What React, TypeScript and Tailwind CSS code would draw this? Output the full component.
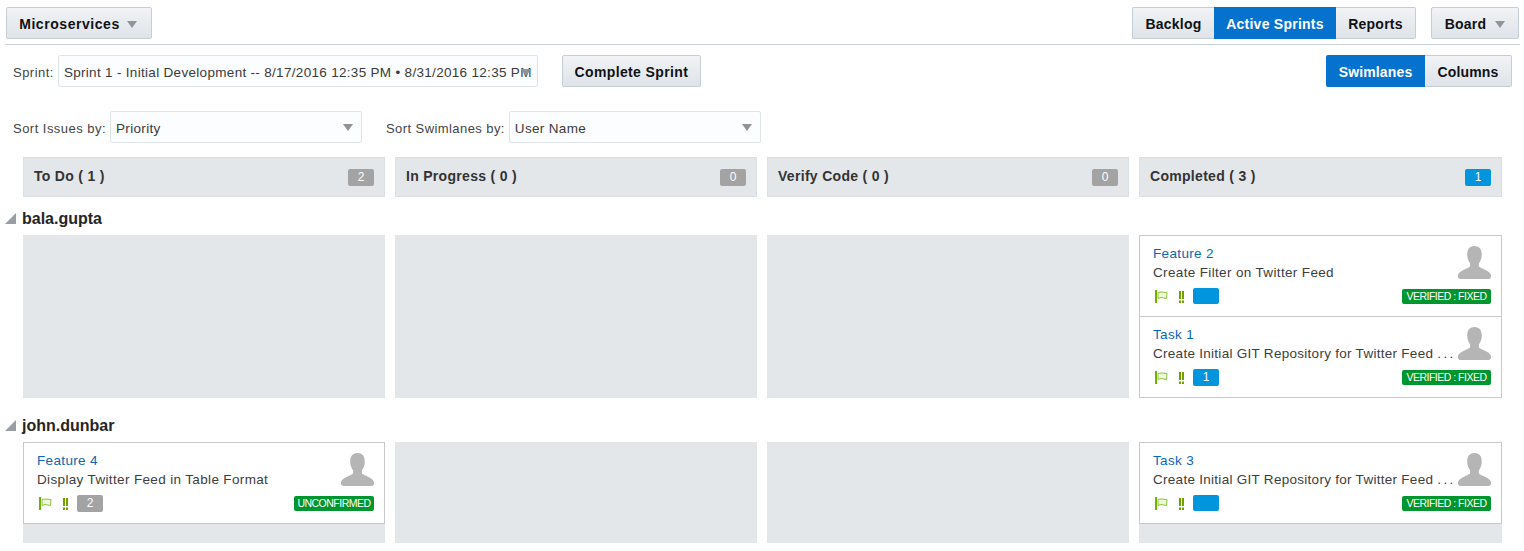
const btn = "h-8 flex items-center justify-center pt-[2px] border border-[#c4ced7] bg-gradient-to-b from-[#f1f3f5] to-[#dfe4e8] text-[14px] font-bold text-[#0f1214]";
const active = "h-8 flex items-center justify-center pt-[2px] bg-[#0572ce] text-[14px] font-bold text-white";
const label = "text-[13px] pt-[4px] text-[#444] tracking-[0.47px]";
const select = "ml-[4px] w-[252px] h-8 flex items-center justify-between pl-[5px] pr-[8px] bg-[#fcfdfe] border border-[#dfe4e8] rounded-[2px] text-[13.5px] text-[#3a3a3a] tracking-[0.33px]";

function Caret({ className = "" }: { className?: string }) {
  return (
    <svg width="10" height="7" viewBox="0 0 10 7" className={className}>
      <polygon points="0,0 10,0 5,7" fill="#8f9499" />
    </svg>
  );
}

function Twisty() {
  return (
    <svg width="11" height="11" viewBox="0 0 11 11" className="shrink-0">
      <polygon points="11,0 11,11 0,11" fill="#9a9ea3" />
    </svg>
  );
}

function Flag() {
  return (
    <svg width="13" height="14" viewBox="0 0 13 14" className="ml-[2px] mt-[2px] shrink-0">
      <rect x="0" y="0" width="2" height="13" fill="#6eb200" />
      <path d="M3 2.5 L6 2 L12 2.5 L11.5 8.5 L6 7.5 L3 8.5 Z" fill="#eef7dc" stroke="#8fc43a" strokeWidth="1" />
    </svg>
  );
}

function Bang() {
  return (
    <svg width="5" height="12" viewBox="0 0 5 12" className="ml-[11px] mt-[3px] shrink-0">
      <rect x="0" y="0" width="2" height="8" fill="#6f9f00" />
      <rect x="3" y="0" width="2" height="8" fill="#6f9f00" />
      <rect x="0" y="9.5" width="2" height="2.5" fill="#6f9f00" />
      <rect x="3" y="9.5" width="2" height="2.5" fill="#6f9f00" />
    </svg>
  );
}

function Avatar() {
  return (
    <svg width="33" height="33" viewBox="0 0 34 34" className="absolute right-[10px] top-[10px]">
      <path
        d="M17 0 C11.5 0 9.5 4 9.5 9 C9.5 13 11 16 12.5 18 L12.5 21 C10 23.5 1 25 0 30 L0 31.5 C0 33 1 34 2.5 34 L31.5 34 C33 34 34 33 34 31.5 L34 30 C33 25 24 23.5 21.5 21 L21.5 18 C23 16 24.5 13 24.5 9 C24.5 4 22.5 0 17 0 Z"
        fill="#b5b5b5"
      />
    </svg>
  );
}

function Card({
  id,
  title,
  more = false,
  status,
  statusW,
  badge,
  badgeColor,
  className = "",
}: {
  id: string;
  title: string;
  more?: boolean;
  status: string;
  statusW: string;
  badge: string;
  badgeColor: string;
  className?: string;
}) {
  return (
    <div className={"relative bg-white shrink-0 pl-[13px] pr-[10px] pt-[9px] " + className}>
      <div className="text-[13.5px] leading-[18px] text-[#0b66b3] tracking-[0.35px]">{id}</div>
      <div className={"text-[13.5px] leading-[20px] text-[#3d3d3d] whitespace-nowrap " + (more ? "tracking-[0.28px]" : "tracking-[0.35px]")}>
        {title}
        {more ? <span className="ml-[4px] tracking-[2.4px]">...</span> : null}
      </div>
      <Avatar />
      <div className="flex items-start h-[17px] mt-[5px]">
        <Flag />
        <Bang />
        <span className={"ml-[9px] w-[26px] rounded-[2px] text-white text-[12px] text-center " + (badge ? "h-[17px] leading-[17px] " : "h-[16px] ") + badgeColor}>{badge}</span>
        <span className={"ml-auto mt-[1px] h-[15px] rounded-[2px] bg-[#00962f] text-white text-[10.5px] leading-[15px] tracking-[-0.5px] text-center whitespace-nowrap " + statusW}>{status}</span>
      </div>
    </div>
  );
}

function Header({ title, count, color }: { title: string; count: string; color: string }) {
  return (
    <div className="h-10 bg-[#e3e7ea] border border-[#d9dfe3] flex items-center justify-between pl-[10px] pr-[10px]">
      <span className="text-[14px] font-bold text-[#333] tracking-[0.3px] pb-[2px]">{title}</span>
      <span className={"w-[26px] h-[17px] rounded-[2px] text-white text-[12px] leading-[17px] text-center " + color}>{count}</span>
    </div>
  );
}

function Empty({ h }: { h: string }) {
  return <div className={"bg-[#e3e7ea] " + h} />;
}

function LaneTitle({ name }: { name: string }) {
  return (
    <div className="flex items-center h-[20px] pl-[5px]">
      <Twisty />
      <span className="ml-[6px] pt-[2px] text-[16px] leading-[20px] font-bold text-[#252525]">{name}</span>
    </div>
  );
}

const cols = "grid grid-cols-[362px_362px_362px_363px] gap-x-[10px] w-[1479px] ml-[23px] ";

export default function App() {
  return (
    <div className="w-[1524px] h-[551px] overflow-hidden bg-white font-['Liberation_Sans',Arial,sans-serif]">
      <div className="mx-[5px] pl-[1px] pr-[1px] h-[45px] border-b border-[#cdd2d6] pt-[7px] flex items-start w-[1515px]">
        <div className={btn + " w-[146px] rounded-[2px] gap-[7px] pr-[2px] tracking-[0.55px]"}>
          <span>Microservices</span>
          <Caret />
        </div>
        <div className="ml-auto flex tracking-[0.25px]">
          <div className={btn + " w-[82px] rounded-l-[2px] border-r-0"}>Backlog</div>
          <div className={active + " w-[122px]"}>Active Sprints</div>
          <div className={btn + " w-[80px] rounded-r-[2px] border-l-0"}>Reports</div>
          <div className={btn + " ml-[15px] w-[88px] rounded-[2px] gap-[9px]"}>
            <span>Board</span>
            <Caret />
          </div>
        </div>
      </div>

      <div className="flex items-center h-8 mt-[10px] pl-[13px] pr-[12px]">
        <span className={label}>Sprint:</span>
        <div className="relative ml-[4px] w-[480px] h-8 flex items-center pl-[5px] pt-[4px] bg-[#fcfdfe] border border-[#dfe4e8] rounded-[2px] text-[13.5px] text-[#3a3a3a] tracking-[0.31px] whitespace-nowrap overflow-hidden">
          Sprint 1 - Initial Development -- 8/17/2016 12:35 PM • 8/31/2016 12:35 PM
          <Caret className="absolute right-[6px] top-[13px]" />
        </div>
        <div className={btn + " ml-[24px] w-[139px] rounded-[2px] tracking-[0.37px]"}>Complete Sprint</div>
        <div className="ml-auto flex tracking-[0.15px]">
          <div className={active + " w-[99px] rounded-l-[2px]"}>Swimlanes</div>
          <div className={btn + " w-[87px] rounded-r-[2px] border-l-0"}>Columns</div>
        </div>
      </div>

      <div className="flex items-center h-8 mt-[24px] pl-[13px]">
        <span className={label}>Sort Issues by:</span>
        <div className={select}>
          <span className="pt-[4px]">Priority</span>
          <Caret />
        </div>
        <span className="ml-[24px] text-[13px] pt-[4px] text-[#444] tracking-[0.42px]">Sort Swimlanes by:</span>
        <div className={select}>
          <span className="pt-[4px]">User Name</span>
          <Caret />
        </div>
      </div>

      <div className={cols + "mt-[14px]"}>
        <Header title="To Do ( 1 )" count="2" color="bg-[#a3a3a3]" />
        <Header title="In Progress ( 0 )" count="0" color="bg-[#a3a3a3]" />
        <Header title="Verify Code ( 0 )" count="0" color="bg-[#a3a3a3]" />
        <Header title="Completed ( 3 )" count="1" color="bg-[#0095dd]" />
      </div>

      <div className="mt-[11px]"><LaneTitle name="bala.gupta" /></div>
      <div className={cols + "mt-[7px]"}>
        <Empty h="h-[163px]" />
        <Empty h="h-[163px]" />
        <Empty h="h-[163px]" />
        <div className="h-[163px] border border-[#c9c9c9] bg-white flex flex-col">
          <Card id="Feature 2" title="Create Filter on Twitter Feed" status="VERIFIED : FIXED" statusW="w-[89px]" badge="" badgeColor="bg-[#0095dd]" className="h-[81px] border-b border-[#c9c9c9]" />
          <Card id="Task 1" title="Create Initial GIT Repository for Twitter Feed" more status="VERIFIED : FIXED" statusW="w-[89px]" badge="1" badgeColor="bg-[#0095dd]" className="h-[80px]" />
        </div>
      </div>

      <div className="mt-[17px]"><LaneTitle name="john.dunbar" /></div>
      <div className={cols + "mt-[7px]"}>
        <div className="h-[101px] bg-[#e3e7ea]">
          <div className="border border-[#c9c9c9] bg-white h-[82px]">
            <Card id="Feature 4" title="Display Twitter Feed in Table Format" status="UNCONFIRMED" statusW="w-[80px]" badge="2" badgeColor="bg-[#a3a3a3]" className="h-[80px]" />
          </div>
        </div>
        <Empty h="h-[101px]" />
        <Empty h="h-[101px]" />
        <div className="h-[101px] bg-[#e3e7ea]">
          <div className="border border-[#c9c9c9] bg-white h-[82px]">
            <Card id="Task 3" title="Create Initial GIT Repository for Twitter Feed" more status="VERIFIED : FIXED" statusW="w-[89px]" badge="" badgeColor="bg-[#0095dd]" className="h-[80px]" />
          </div>
        </div>
      </div>
    </div>
  );
}
